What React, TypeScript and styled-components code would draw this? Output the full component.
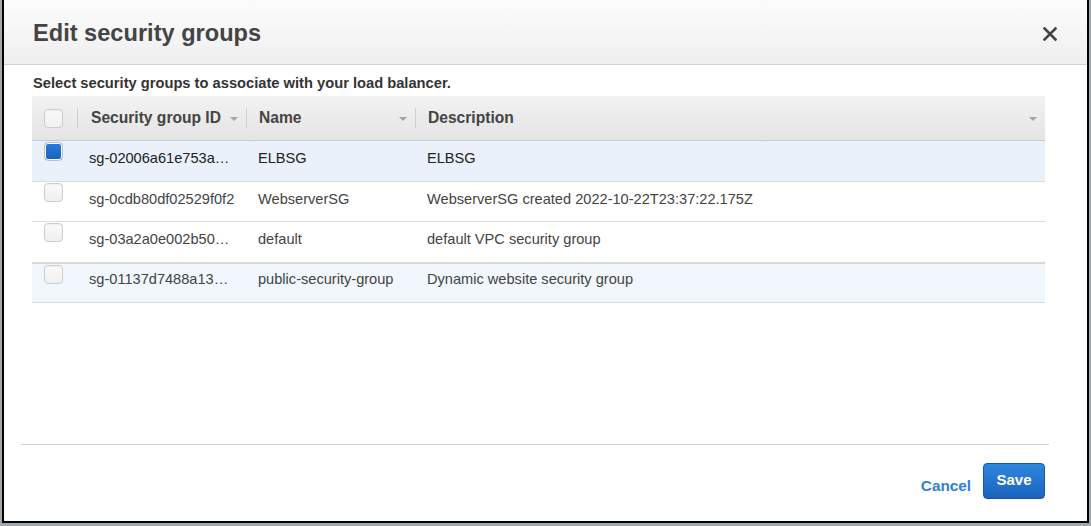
import styled, { createGlobalStyle } from "styled-components";

const GlobalStyle = createGlobalStyle`
  html, body {
    margin: 0;
    padding: 0;
    background: #a3a8ad;
    overflow: hidden;
  }
  body {
    font-family: "Liberation Sans", Arial, sans-serif;
  }
`

const Page = styled.div`
  width: 1091px;
  height: 526px;
  padding-left: 2px;
  box-sizing: border-box;
  background: #a3a8ad;
`

const Modal = styled.div`
  margin-top: -2px;
  width: 1087px;
  height: 525px;
  box-sizing: border-box;
  border: 2px solid #000;
  background: #fff;
  display: flex;
  flex-direction: column;
`

const Header = styled.div`
  height: 64px;
  flex-shrink: 0;
  border-bottom: 1px solid #d2d2d2;
  background: linear-gradient(to bottom, #fcfcfc 0%, #efefef 100%);
  display: flex;
  align-items: center;
  justify-content: space-between;
  padding: 0 30px 0 29px;
`

const Title = styled.h1`
  margin: 0;
  padding-top: 1px;
  font-size: 23.6px;
  line-height: 28px;
  font-weight: bold;
  color: #444;
`

const CloseButton = styled.button`
  border: 0;
  background: transparent;
  padding: 0;
  margin-top: 4px;
  width: 14px;
  height: 14px;
  display: flex;
  cursor: pointer;
`

const Body = styled.div`
  flex: 1;
  padding: 10px 42px 0 28px;
`

const Lead = styled.p`
  margin: 0 0 4px 1px;
  font-size: 14.7px;
  line-height: 17px;
  font-weight: bold;
  color: #333;
`

const Table = styled.div`
  display: grid;
  grid-template-columns: 45px 169px 169px 1fr;
`

const HeadCell = styled.div`
  height: 44px;
  border-bottom: 1px solid #c9c9c9;
  background: linear-gradient(to bottom, #f2f2f2 0%, #e4e4e4 100%);
  display: flex;
  align-items: center;
  font-size: 15.6px;
  font-weight: bold;
  color: #444;
`

const Separator = styled.span`
  width: 1px;
  height: 20px;
  background: #cfcfcf;
  flex-shrink: 0;
`

const HeadLabel = styled.span<{ $first?: boolean }>`
  flex: 1;
  padding-left: ${p => (p.$first ? "13px" : "12px")};
  white-space: nowrap;
  overflow: hidden;
`

const Caret = styled.span`
  width: 0;
  height: 0;
  margin: 2px 8px 0 4px;
  border-left: 4px solid transparent;
  border-right: 4px solid transparent;
  border-top: 4px solid #a3a3a3;
`

type RowProps = { $tone?: "selected" | "hover" | "plain"; $thick?: boolean }

const Cell = styled.div<RowProps>`
  height: 40.5px;
  box-sizing: border-box;
  padding: ${p => (p.$thick ? "5px" : "7px")} 10px 0 12px;
  font-size: 14.6px;
  line-height: 20px;
  color: ${p => (p.$tone === "selected" ? "#222" : "#444")};
  background: ${p =>
    p.$tone === "selected" ? "#eaf1fb" : p.$tone === "hover" ? "#f1f7fd" : "#fff"};
  border-bottom: 1px solid #dcdcdc;
  border-top: ${p => (p.$thick ? "1px solid #d6d6d6" : "0")};
  white-space: nowrap;
  overflow: hidden;
  text-overflow: ellipsis;
`

const CheckCell = styled(Cell)`
  padding: 1px 0 0 12px;
`

const HeadCheckCell = styled(HeadCell)`
  padding-left: 12px;
`

const Box = styled.span<{ checked?: boolean }>`
  display: block;
  width: 19px;
  height: 19px;
  box-sizing: border-box;
  border-radius: 4px;
  border: 1px solid ${p => (p.checked ? "#b9c3cf" : "#cdcdcd")};
  background: ${p =>
    p.checked
      ? "linear-gradient(to bottom, #2a7ed8 0%, #1662bd 100%)"
      : "linear-gradient(to bottom, #fafafa 0%, #f0f0f0 100%)"};
  box-shadow: ${p =>
    p.checked ? "inset 0 0 0 1px #fff" : "inset 0 1px 1px rgba(0,0,0,0.04)"};
`

const Divider = styled.div`
  height: 1px;
  flex-shrink: 0;
  background: #cfcfcf;
  margin: 0 38px 0 17px;
`

const Actions = styled.div`
  height: 76px;
  flex-shrink: 0;
  display: flex;
  align-items: center;
  justify-content: flex-end;
  gap: 12px;
  padding: 0 42px 4px 0;
  box-sizing: border-box;
`

const CancelLink = styled.a`
  margin-top: 8px;
  font-size: 15.3px;
  line-height: 17px;
  font-weight: bold;
  color: #2f80d8;
  cursor: pointer;
`

const SaveButton = styled.button`
  width: 62px;
  height: 36px;
  border-radius: 4px;
  border: 1px solid #1a58a6;
  background: linear-gradient(to bottom, #2f86dd 0%, #1a63be 100%);
  color: #fff;
  font-family: "Liberation Sans", Arial, sans-serif;
  font-size: 15px;
  font-weight: bold;
  padding: 0 0 3px 0;
  cursor: pointer;
`

type Group = {
  id: string
  name: string
  description: string
  checked?: boolean
  tone: "selected" | "hover" | "plain"
  thick?: boolean
}

const groups: Group[] = [
  { id: "sg-02006a61e753a…", name: "ELBSG", description: "ELBSG", checked: true, tone: "selected" },
  { id: "sg-0cdb80df02529f0f2", name: "WebserverSG", description: "WebserverSG created 2022-10-22T23:37:22.175Z", tone: "plain" },
  { id: "sg-03a2a0e002b50…", name: "default", description: "default VPC security group", tone: "plain" },
  { id: "sg-01137d7488a13…", name: "public-security-group", description: "Dynamic website security group", tone: "hover", thick: true },
]

export default function App() {
  return (
    <Page>
      <GlobalStyle />
      <Modal>
        <Header>
          <Title>Edit security groups</Title>
          <CloseButton aria-label="Close">
            <svg width="14" height="14" viewBox="0 0 14 14">
              <path d="M1.5 1.5 L12.5 12.5 M12.5 1.5 L1.5 12.5" stroke="#444" strokeWidth="2.6" strokeLinecap="square" />
            </svg>
          </CloseButton>
        </Header>
        <Body>
          <Lead>Select security groups to associate with your load balancer.</Lead>
          <Table>
            <HeadCheckCell><Box /></HeadCheckCell>
            <HeadCell><Separator /><HeadLabel $first>Security group ID</HeadLabel><Caret /></HeadCell>
            <HeadCell><Separator /><HeadLabel>Name</HeadLabel><Caret /></HeadCell>
            <HeadCell><Separator /><HeadLabel>Description</HeadLabel><Caret /></HeadCell>
            {groups.map(g => (
              <>
                <CheckCell key={g.id + "c"} $tone={g.tone} $thick={g.thick}><Box checked={g.checked} /></CheckCell>
                <Cell key={g.id + "i"} $tone={g.tone} $thick={g.thick}>{g.id}</Cell>
                <Cell key={g.id + "n"} $tone={g.tone} $thick={g.thick}>{g.name}</Cell>
                <Cell key={g.id + "d"} $tone={g.tone} $thick={g.thick}>{g.description}</Cell>
              </>
            ))}
          </Table>
        </Body>
        <Divider />
        <Actions>
          <CancelLink>Cancel</CancelLink>
          <SaveButton>Save</SaveButton>
        </Actions>
      </Modal>
    </Page>
  )
}
